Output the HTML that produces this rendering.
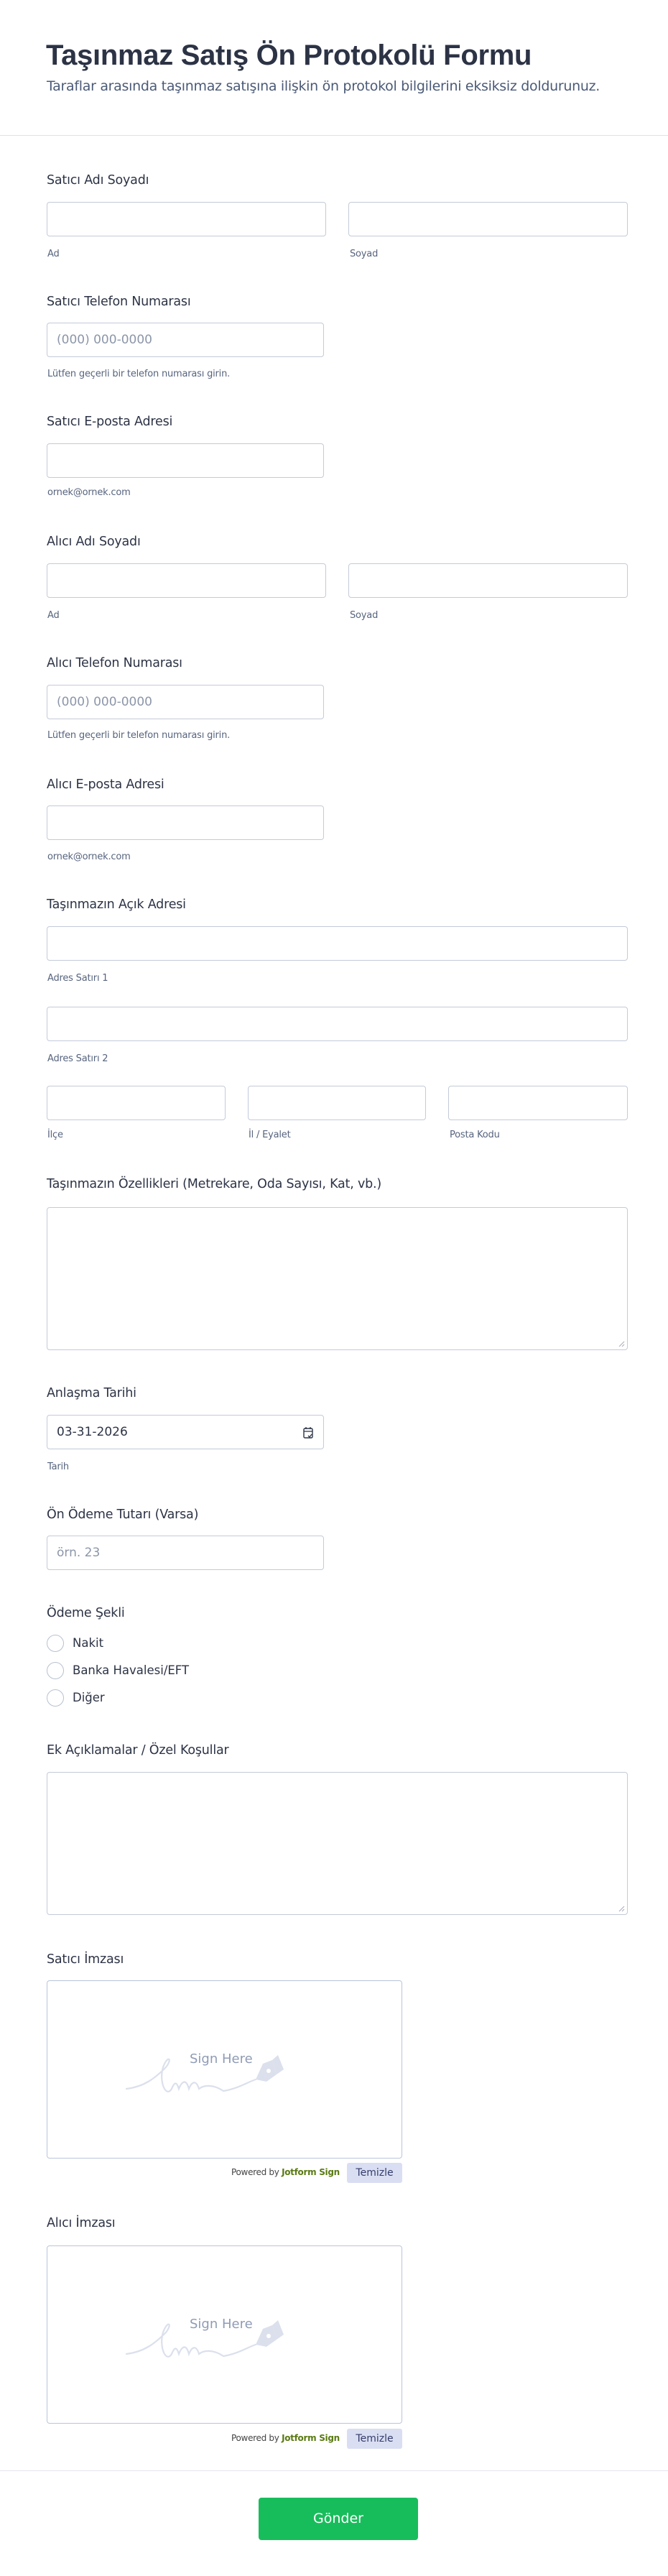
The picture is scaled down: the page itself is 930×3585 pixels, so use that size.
<!DOCTYPE html>
<html><head><meta charset="utf-8"><style>
*{box-sizing:border-box;margin:0;padding:0}
body{width:930px;height:3585px;position:relative;background:#fff;font-family:"DejaVu Sans","Liberation Sans",sans-serif;color:#2c3345;overflow:hidden}
.a{position:absolute}
.t{position:absolute;white-space:nowrap;height:24px;line-height:24px}
.lb{font-size:17.5px;color:#2c3345;letter-spacing:-0.2px}
.sl{font-size:13px;color:#57647e;letter-spacing:-0.2px}
.in{position:absolute;border:1px solid #c3cad8;border-radius:4px;background:#fff}
.ph{position:absolute;left:13px;top:0;line-height:46px;font-size:17px;color:#8c96a9}
.rd{position:absolute;left:65px;width:24px;height:24px;border:1px solid #b8c0cf;border-radius:50%}
.rt{font-size:16.5px;color:#2c3345}
.sig{position:absolute;left:65px;width:495px;height:248px;border:1px solid #b9c4dc;border-radius:4px}
.btn{position:absolute;left:483px;width:77px;height:28px;background:#dadef3;border-radius:3px;font-size:14px;color:#343c6a;text-align:center;line-height:28px}
.pw{position:absolute;left:322px;font-size:12px;color:#444;white-space:nowrap;line-height:16px;letter-spacing:-0.3px}
.pw b{color:#5a7a12}
</style></head><body>
<div class="t" style="left:64px;top:53px;height:48px;line-height:48px;font-family:'Liberation Sans',sans-serif;font-size:40px;font-weight:bold;letter-spacing:-0.3px">Taşınmaz Satış Ön Protokolü Formu</div>
<div class="t" style="left:65px;top:108px;font-size:19px;color:#4b5a77;letter-spacing:-0.3px">Taraflar arasında taşınmaz satışına ilişkin ön protokol bilgilerini eksiksiz doldurunuz.</div>
<div class="a" style="left:0;top:188px;width:930px;height:1px;background:#dde1ea"></div>

<div class="t lb" style="left:65px;top:239px">Satıcı Adı Soyadı</div>
<div class="in" style="left:65px;top:281px;width:389px;height:48px"></div>
<div class="in" style="left:485px;top:281px;width:389px;height:48px"></div>
<div class="t sl" style="left:66px;top:342px">Ad</div>
<div class="t sl" style="left:487px;top:342px">Soyad</div>

<div class="t lb" style="left:65px;top:408px">Satıcı Telefon Numarası</div>
<div class="in" style="left:65px;top:449px;width:386px;height:48px"><span class="ph">(000) 000-0000</span></div>
<div class="t sl" style="left:66px;top:509px">Lütfen geçerli bir telefon numarası girin.</div>

<div class="t lb" style="left:65px;top:575px">Satıcı E-posta Adresi</div>
<div class="in" style="left:65px;top:617px;width:386px;height:48px"></div>
<div class="t sl" style="left:66px;top:674px">ornek@ornek.com</div>

<div class="t lb" style="left:65px;top:742px">Alıcı Adı Soyadı</div>
<div class="in" style="left:65px;top:784px;width:389px;height:48px"></div>
<div class="in" style="left:485px;top:784px;width:389px;height:48px"></div>
<div class="t sl" style="left:66px;top:845px">Ad</div>
<div class="t sl" style="left:487px;top:845px">Soyad</div>

<div class="t lb" style="left:65px;top:911px">Alıcı Telefon Numarası</div>
<div class="in" style="left:65px;top:953px;width:386px;height:48px"><span class="ph">(000) 000-0000</span></div>
<div class="t sl" style="left:66px;top:1012px">Lütfen geçerli bir telefon numarası girin.</div>

<div class="t lb" style="left:65px;top:1080px">Alıcı E-posta Adresi</div>
<div class="in" style="left:65px;top:1121px;width:386px;height:48px"></div>
<div class="t sl" style="left:66px;top:1181px">ornek@ornek.com</div>

<div class="t lb" style="left:65px;top:1247px">Taşınmazın Açık Adresi</div>
<div class="in" style="left:65px;top:1289px;width:809px;height:48px"></div>
<div class="t sl" style="left:66px;top:1350px">Adres Satırı 1</div>
<div class="in" style="left:65px;top:1401px;width:809px;height:48px"></div>
<div class="t sl" style="left:66px;top:1462px">Adres Satırı 2</div>
<div class="in" style="left:65px;top:1511px;width:249px;height:48px"></div>
<div class="in" style="left:345px;top:1511px;width:248px;height:48px"></div>
<div class="in" style="left:624px;top:1511px;width:250px;height:48px"></div>
<div class="t sl" style="left:66px;top:1568px">İlçe</div>
<div class="t sl" style="left:346px;top:1568px">İl / Eyalet</div>
<div class="t sl" style="left:626px;top:1568px">Posta Kodu</div>

<div class="t lb" style="left:65px;top:1636px">Taşınmazın Özellikleri (Metrekare, Oda Sayısı, Kat, vb.)</div>
<div class="in" style="left:65px;top:1680px;width:809px;height:199px"></div>
<svg class="a" style="left:860px;top:1865px" width="10" height="10"><path d="M9 2L2 9M9 6L6 9" stroke="#aab" stroke-width="1"/></svg>

<div class="t lb" style="left:65px;top:1927px">Anlaşma Tarihi</div>
<div class="in" style="left:65px;top:1969px;width:386px;height:48px"><span class="ph" style="color:#2c3345">03-31-2026</span>
<svg class="a" style="left:355px;top:15px" width="16" height="18" viewBox="0 0 16 18"><rect x="2" y="3" width="12" height="13" rx="1.5" fill="none" stroke="#2c3345" stroke-width="1.4"/><path d="M2 7H14M5 1V4M11 1V4M8 13l2 2 3-4" fill="none" stroke="#2c3345" stroke-width="1.3"/></svg></div>
<div class="t sl" style="left:66px;top:2030px">Tarih</div>

<div class="t lb" style="left:65px;top:2096px">Ön Ödeme Tutarı (Varsa)</div>
<div class="in" style="left:65px;top:2137px;width:386px;height:48px"><span class="ph">örn. 23</span></div>

<div class="t lb" style="left:65px;top:2233px">Ödeme Şekli</div>
<div class="rd" style="top:2275px"></div><div class="t rt" style="left:101px;top:2275px">Nakit</div>
<div class="rd" style="top:2313px"></div><div class="t rt" style="left:101px;top:2313px">Banka Havalesi/EFT</div>
<div class="rd" style="top:2351px"></div><div class="t rt" style="left:101px;top:2351px">Diğer</div>

<div class="t lb" style="left:65px;top:2424px">Ek Açıklamalar / Özel Koşullar</div>
<div class="in" style="left:65px;top:2466px;width:809px;height:199px"></div>
<svg class="a" style="left:860px;top:2651px" width="10" height="10"><path d="M9 2L2 9M9 6L6 9" stroke="#aab" stroke-width="1"/></svg>

<div class="t lb" style="left:65px;top:2715px">Satıcı İmzası</div>
<div class="sig" style="top:2756px">
<div class="t" style="left:198px;top:97px;font-size:18px;color:#8f9bb5">Sign Here</div>
<svg class="a" style="left:105px;top:95px" width="280" height="80" viewBox="0 0 280 80"><path d="M5 55C30 52 45 40 60 25C70 12 62 8 56 25C50 45 60 68 68 55C72 45 75 45 78 55C82 45 88 40 92 55C96 45 102 42 106 55C112 50 125 48 140 58C160 55 175 45 185 42" fill="none" stroke="#dbe0ec" stroke-width="2.2" stroke-linecap="round"/><path d="M185 42L195 20L208 15L214 35L200 45Z" fill="#dbe0ec"/><path d="M208 15L216 8L224 28L214 35Z" fill="#dbe0ec"/><circle cx="203" cy="30" r="3" fill="#fff"/></svg>
</div>
<div class="pw" style="top:3015px">Powered by <b>Jotform Sign</b></div>
<div class="btn" style="top:3010px">Temizle</div>

<div class="t lb" style="left:65px;top:3082px">Alıcı İmzası</div>
<div class="sig" style="top:3125px">
<div class="t" style="left:198px;top:97px;font-size:18px;color:#8f9bb5">Sign Here</div>
<svg class="a" style="left:105px;top:95px" width="280" height="80" viewBox="0 0 280 80"><path d="M5 55C30 52 45 40 60 25C70 12 62 8 56 25C50 45 60 68 68 55C72 45 75 45 78 55C82 45 88 40 92 55C96 45 102 42 106 55C112 50 125 48 140 58C160 55 175 45 185 42" fill="none" stroke="#dbe0ec" stroke-width="2.2" stroke-linecap="round"/><path d="M185 42L195 20L208 15L214 35L200 45Z" fill="#dbe0ec"/><path d="M208 15L216 8L224 28L214 35Z" fill="#dbe0ec"/><circle cx="203" cy="30" r="3" fill="#fff"/></svg>
</div>
<div class="pw" style="top:3385px">Powered by <b>Jotform Sign</b></div>
<div class="btn" style="top:3380px">Temizle</div>

<div class="a" style="left:0;top:3438px;width:930px;height:1px;background:#e3e6ee"></div>
<div class="a" style="left:360px;top:3476px;width:222px;height:59px;background:#18bd5b;border-radius:4px;color:#fff;font-size:19px;text-align:center;line-height:59px">Gönder</div>
</body></html>
